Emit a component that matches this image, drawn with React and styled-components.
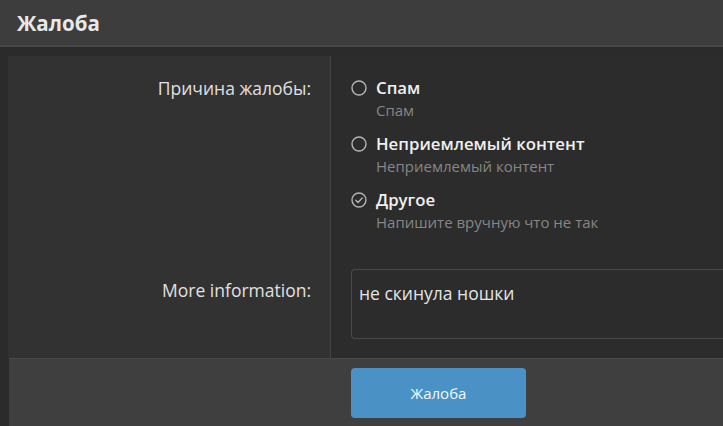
import React from "react";
import styled, { createGlobalStyle } from "styled-components";

const Global = createGlobalStyle`
  html, body {
    margin: 0;
    padding: 0;
    background: #2b2b2b;
    font-family: "Open Sans", "Noto Sans", sans-serif;
    overflow: hidden;
  }
  * { box-sizing: border-box; }
`;

const Header = styled.div`
  height: 47px;
  background: #3d3d3d;
  border-bottom: 2px solid #474747;
  display: flex;
  align-items: center;
  padding-left: 17px;
  color: #e8e8e8;
  font-size: 20.5px;
  font-weight: 700;
`;

const Overlay = styled.div`
  padding: 9px 0 0 8px;
`;

const Form = styled.div`
  display: grid;
  grid-template-columns: 323px 1fr;
`;

const LabelCell = styled.div`
  background: #323232;
  border-right: 1px solid #434343;
  text-align: right;
  padding: ${(p) => p.$top}px 19px 0 0;
  color: #e0e0e0;
  font-size: 17.5px;
  line-height: 24px;
`;

const FieldCell = styled.div`
  background: #2c2c2c;
  padding: ${(p) => p.$top}px 0 ${(p) => p.$bottom}px 20px;
`;

const RadioList = styled.div`
  display: flex;
  flex-direction: column;
  gap: 12px;
`;

const RadioItem = styled.label`
  display: grid;
  grid-template-columns: 16px 1fr;
  column-gap: 9px;
  align-items: center;
`;

const RadioMark = styled.span`
  display: flex;
  width: 16px;
  height: 24px;
  align-items: center;
  justify-content: center;
`;

const RadioText = styled.span`
  color: #f0f0f0;
  font-size: 16.8px;
  font-weight: 600;
  line-height: 24px;
`;

const Hint = styled.span`
  grid-column: 2;
  color: #868686;
  font-size: 15px;
  line-height: 20px;
`;

const TextBox = styled.div`
  height: 70px;
  border: 1px solid #4a4a4a;
  border-right: none;
  border-radius: 4px 0 0 4px;
  background: #2c2c2c;
  padding: 11px 7px;
  color: #e4e4e4;
  font-size: 17.5px;
  line-height: 24px;
`;

const Footer = styled.div`
  margin-left: 1px;
  background: #3f3f3f;
  border-top: 1px solid #4a4a4a;
  padding: 9px 0 12px 342px;
  height: 68px;
`;

const Button = styled.button`
  width: 175px;
  height: 50px;
  border: none;
  border-radius: 4px;
  background: #4a92c6;
  color: #f4f8fb;
  font-family: inherit;
  font-size: 15px;
  cursor: pointer;
`;

const Circle = ({ checked }) => (
  <svg width="16" height="16" viewBox="0 0 16 16" fill="none">
    <circle cx="8" cy="8" r="7" stroke="#b4b4b4" strokeWidth="1.4" />
    {checked && (
      <path d="M4.8 8.2l2.2 2.2 4.2-4.4" stroke="#b4b4b4" strokeWidth="1.4" strokeLinecap="round" strokeLinejoin="round" />
    )}
  </svg>
);

const reasons = [
  { title: "Спам", hint: "Спам" },
  { title: "Неприемлемый контент", hint: "Неприемлемый контент" },
  { title: "Другое", hint: "Напишите вручную что не так", checked: true },
];

export default function App() {
  return (
    <>
      <Global />
      <Header>Жалоба</Header>
      <Overlay>
        <Form>
          <LabelCell $top={20}>Причина жалобы:</LabelCell>
          <FieldCell $top={20} $bottom={26}>
            <RadioList>
              {reasons.map((r) => (
                <RadioItem key={r.title}>
                  <RadioMark>
                    <Circle checked={r.checked} />
                  </RadioMark>
                  <RadioText>{r.title}</RadioText>
                  <Hint>{r.hint}</Hint>
                </RadioItem>
              ))}
            </RadioList>
          </FieldCell>
          <LabelCell $top={20}>More information:</LabelCell>
          <FieldCell $top={11} $bottom={19}>
            <TextBox>не скинула ношки</TextBox>
          </FieldCell>
        </Form>
        <Footer>
          <Button>Жалоба</Button>
        </Footer>
      </Overlay>
    </>
  );
}
